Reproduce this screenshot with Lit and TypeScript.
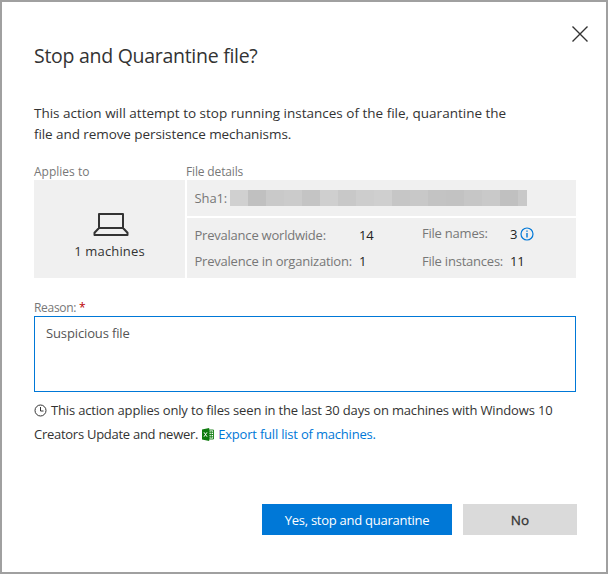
import { LitElement, html, css } from "lit";
import { customElement, state } from "lit/decorators.js";

const REDACTED = ["#d0d0d0", "#c0c0c0", "#c9c9c9", "#cbcbcb", "#c4c4c4", "#cfcfcf", "#c8c8c8", "#cdcdcd", "#cfcfcf", "#c6c6c6", "#c8c8c8", "#c3c3c3", "#c2c2c2", "#c6c6c6", "#c9c9c9", "#c0c0c0", "#c8c8c8"];

@customElement("app-root")
export class AppRoot extends LitElement {
  @state() private reason = "Suspicious file";

  static styles = css`
    :host {
      display: block;
      box-sizing: border-box;
      width: 608px;
      height: 574px;
      border: 2px solid #a0a0a0;
      background: #fff;
      color: #333;
      font: 13px/20px "Open Sans", "Noto Sans", sans-serif;
      overflow: hidden;
    }
    * { box-sizing: border-box; }
    .dialog { display: flex; flex-direction: column; height: 570px; padding: 23px 30px 0 32px; white-space: nowrap; }
    svg { display: block; flex: none; }
    header { display: flex; justify-content: space-between; height: 60px; }
    h1 { margin: 17px 0 0; font-size: 19.5px; line-height: 28px; font-weight: 400; letter-spacing: -0.28px; }
    button { border: 0; padding: 0; font: inherit; color: inherit; background: none; }
    .close { width: 18px; height: 18px; margin-right: -13px; padding: 1px; }
    .intro { margin: 18px 0 0; line-height: 21px; font-size: 13.5px; }
    .intro span { display: block; }
    .intro .second { letter-spacing: -0.08px; }
    .caption { height: 18px; padding-top: 1px; color: #777; font-size: 12px; line-height: 18px; }
    .details-caption { margin-left: -1px; letter-spacing: -0.15px; }
    .info { display: grid; grid-template-columns: 151px 389px; column-gap: 2px; margin-top: 17px; }
    .panel { background: #f0f0f0; }
    .machines { height: 98px; display: flex; flex-direction: column; align-items: center; padding-top: 32px; }
    .machines svg { margin-left: 3px; }
    .machines span { margin-top: 5px; letter-spacing: 0.15px; }
    .details { display: grid; grid-template-rows: 36px 60px; row-gap: 2px; color: #777; }
    .sha { display: flex; align-items: center; padding-left: 7.5px; }
    .sha span { width: 35.5px; letter-spacing: -0.1px; }
    .mosaic { display: flex; height: 16px; width: 297px; overflow: hidden; }
    .mosaic i { flex: 0 0 18px; }
    .facts { display: grid; grid-template-columns: 164.5px 63px 88px 1fr; grid-template-rows: 26px 26px; padding: 4px 0 0 7.5px; line-height: 26px; letter-spacing: -0.22px; }
    .facts b { font-weight: 400; color: #222; display: flex; align-items: center; }
    .facts svg { margin-left: 3px; }
    .up { margin-top: -2px; }
    .reason { margin-top: 20px; letter-spacing: -0.3px; }
    .req { color: #b00; }
    textarea { display: block; width: 542px; height: 76px; margin: 0; padding: 6px 11px; border: 1px solid #0078d7; outline: 0; resize: none; font: inherit; letter-spacing: -0.13px; color: #555; background: #fff; }
    .note { margin: 6px 0 0; }
    .line { display: flex; align-items: center; height: 24px; letter-spacing: -0.165px; }
    .line svg { margin-right: 4px; }
    .line .end { letter-spacing: -0.27px; margin-right: 4px; }
    a { color: #0078d7; text-decoration: none; letter-spacing: -0.2px; }
    footer { display: flex; justify-content: flex-end; gap: 11px; margin: auto 0 37px; }
    .primary { width: 190px; height: 31px; background: #0078d7; color: #fff; letter-spacing: -0.26px; }
    .secondary { width: 114px; height: 31px; margin-right: -1px; background: #dadada; font-size: 13.5px; -webkit-text-stroke: 0.3px #333; }
  `;

  render() {
    return html`
      <div class="dialog">
        <header>
          <h1>Stop and Quarantine file?</h1>
          <button class="close" aria-label="Close">
            <svg width="16" height="16" viewBox="0 0 16 16"><path d="M.5.5l15 15M15.5.5l-15 15" stroke="#333" stroke-width="1.4" /></svg>
          </button>
        </header>
        <p class="intro">
          <span>This action will attempt to stop running instances of the file, quarantine the</span>
          <span class="second">file and remove persistence mechanisms.</span>
        </p>
        <section class="info">
          <span class="caption">Applies to</span><span class="caption details-caption">File details</span>
          <div class="panel machines">
            <svg width="36" height="24" viewBox="0 0 36 24" fill="none" stroke="#333" stroke-width="2" stroke-linejoin="round"><path d="M6 16V2h24v14zM6 16l-4.5 4.8V23h33v-2.2L30 16" /></svg>
            <span>1 machines</span>
          </div>
          <div class="details">
            <div class="panel sha"><span>Sha1:</span><div class="mosaic">${REDACTED.map((c) => html`<i style="background:${c}"></i>`)}</div></div>
            <div class="panel facts">
              <span>Prevalance worldwide:</span><b>14</b>
              <span class="up">File names:</span>
              <b class="up">3 <svg width="14" height="14" viewBox="0 0 14 14"><circle cx="7" cy="7" r="6" fill="none" stroke="#0078d7" stroke-width="1.2" /><path d="M7 3.5v1.3M7 6v4.5" stroke="#0078d7" stroke-width="1.4" /></svg></b>
              <span>Prevalence in organization:</span><b>1</b>
              <span>File instances:</span><b>11</b>
            </div>
          </div>
        </section>
        <label class="caption reason">Reason: <span class="req">*</span></label>
        <textarea .value=${this.reason}></textarea>
        <div class="note">
          <div class="line">
            <svg width="13" height="13" viewBox="0 0 13 13" fill="none" stroke="#333"><circle cx="6.5" cy="6.5" r="5.5" /><path d="M6.5 3v4h3" /></svg>
            <span>This action applies only to files seen in the last 30 days on machines with Windows 10</span>
          </div>
          <div class="line">
            <span class="end">Creators Update and newer.</span>
            <svg width="12" height="13" viewBox="0 0 12 13">
              <path d="M7 2h4.5v9H7z" fill="#fff" stroke="#107c10" stroke-width=".9" />
              <path d="M7 4.2h4M7 6.5h4M7 8.8h4M9.2 3v7" stroke="#107c10" stroke-width=".9" />
              <path d="M0 1.5L7.2 0v13L0 11.5z" fill="#107c10" />
              <path d="M2 4.3l3 4.4M5 4.3L2 8.7" stroke="#fff" stroke-width="1" />
            </svg>
            <a>Export full list of machines.</a>
          </div>
        </div>
        <footer><button class="primary">Yes, stop and quarantine</button><button class="secondary">No</button></footer>
      </div>`;
  }
}
